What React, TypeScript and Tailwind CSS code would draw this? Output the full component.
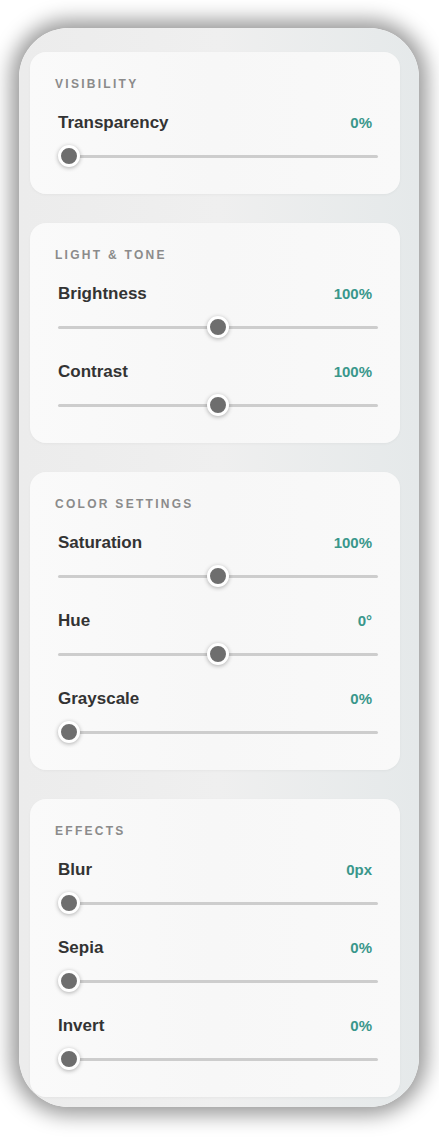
const SECTIONS = [
  {
    title: 'VISIBILITY',
    rows: [{ label: 'Transparency', value: '0%', pos: 0 }],
  },
  {
    title: 'LIGHT & TONE',
    rows: [
      { label: 'Brightness', value: '100%', pos: 0.5 },
      { label: 'Contrast', value: '100%', pos: 0.5 },
    ],
  },
  {
    title: 'COLOR SETTINGS',
    rows: [
      { label: 'Saturation', value: '100%', pos: 0.5 },
      { label: 'Hue', value: '0°', pos: 0.5 },
      { label: 'Grayscale', value: '0%', pos: 0 },
    ],
  },
  {
    title: 'EFFECTS',
    rows: [
      { label: 'Blur', value: '0px', pos: 0 },
      { label: 'Sepia', value: '0%', pos: 0 },
      { label: 'Invert', value: '0%', pos: 0 },
    ],
  },
]

function Slider({ pos }: { pos: number }) {
  return (
    <div className="relative h-[22px] mt-[12px]">
      <div className="absolute left-0 right-0 top-[10px] h-[3px] rounded-full bg-[#cdcdcd]" />
      <div
        className="absolute top-0 w-[22px] h-[22px] rounded-full bg-[#6e6e6e] border-[3px] border-white shadow-[0_1px_4px_rgba(0,0,0,0.3)]"
        style={{ left: `calc(${pos * 100}% - ${pos * 22}px)` }}
      />
    </div>
  )
}

export default function App() {
  return (
    <div className="w-[439px] h-[1139px] bg-white pt-[28px] pl-[19px] font-['Liberation_Sans',Arial,sans-serif]">
      <div className="w-[400px] h-[1079px] overflow-hidden rounded-[50px] bg-gradient-to-r from-[#ececec] via-[#efefef] to-[#e5e9ea] pt-[24px] pl-[11px] pr-[19px] shadow-[0_0_20px_8px_rgba(0,0,0,0.4)]">
        <div className="flex flex-col gap-[29px]">
          {SECTIONS.map(section => (
            <div
              key={section.title}
              className="rounded-[16px] bg-gradient-to-r from-[#fafafa] via-[#f7f7f7] to-[#f9f9f9] pt-[25px] pb-[27px] pl-[25px] pr-[22px] shadow-[0_1px_3px_rgba(0,0,0,0.04)]"
            >
              <div className="text-[12px] font-bold tracking-[0.19em] text-[#8b8b8b] leading-[14px]">
                {section.title}
              </div>
              <div className="flex flex-col gap-[24px] mt-[22px] pl-[3px]">
                {section.rows.map(row => (
                  <div key={row.label}>
                    <div className="flex items-center justify-between pr-[6px] h-[20px]">
                      <span className="text-[17px] font-bold text-[#333333]">{row.label}</span>
                      <span className="text-[15px] font-bold text-[#3a978b]">{row.value}</span>
                    </div>
                    <Slider pos={row.pos} />
                  </div>
                ))}
              </div>
            </div>
          ))}
        </div>
      </div>
    </div>
  )
}
